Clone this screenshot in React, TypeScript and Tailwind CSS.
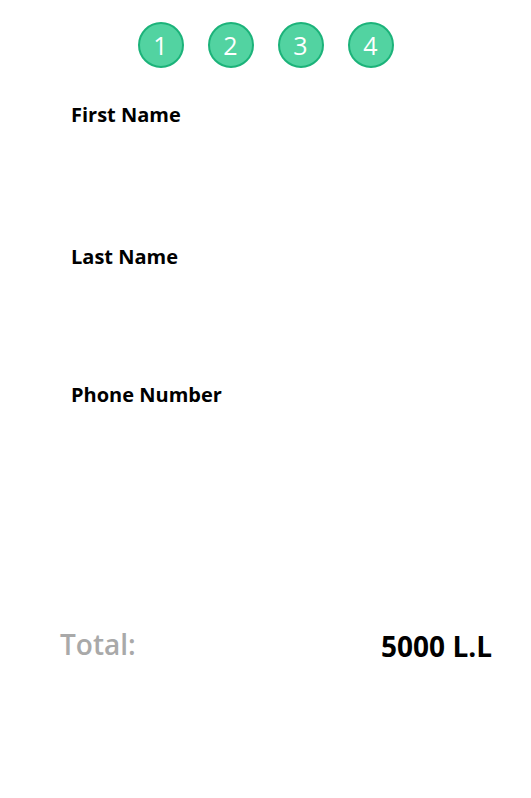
import React from 'react';

const steps = ['1', '2', '3', '4'];

const fields = [
  { label: 'First Name', gap: 'mb-[116px]' },
  { label: 'Last Name', gap: 'mb-[112px]' },
  { label: 'Phone Number', gap: '' },
];

const App: React.FC = () => {
  return (
    <div className="min-h-screen w-full bg-white font-['Open_Sans',sans-serif]">
      {/* step indicator */}
      <div className="flex justify-center gap-[24px] pt-[22px]">
        {steps.map((s) => (
          <div
            key={s}
            className="flex h-[46px] w-[46px] items-center justify-center rounded-full border-2 border-[#1cb37a] bg-[#52d3a1] text-[25px] leading-none text-white"
          >
            {s}
          </div>
        ))}
      </div>

      <div className="pl-[71px] pt-[34px]">
        {fields.map((f) => (
          <div key={f.label} className={f.gap}>
            <label className="block text-[20px] font-bold leading-[26px] text-black">{f.label}</label>
          </div>
        ))}
      </div>

      <div className="mt-[213px] flex items-center justify-between pl-[60px] pr-[39px]">
        <span className="text-[28px] font-semibold text-[#a9a9a9]">Total:</span>
        <span className="mt-[4px] text-[28px] font-bold text-black">5000 L.L</span>
      </div>
    </div>
  );
};

export default App;
